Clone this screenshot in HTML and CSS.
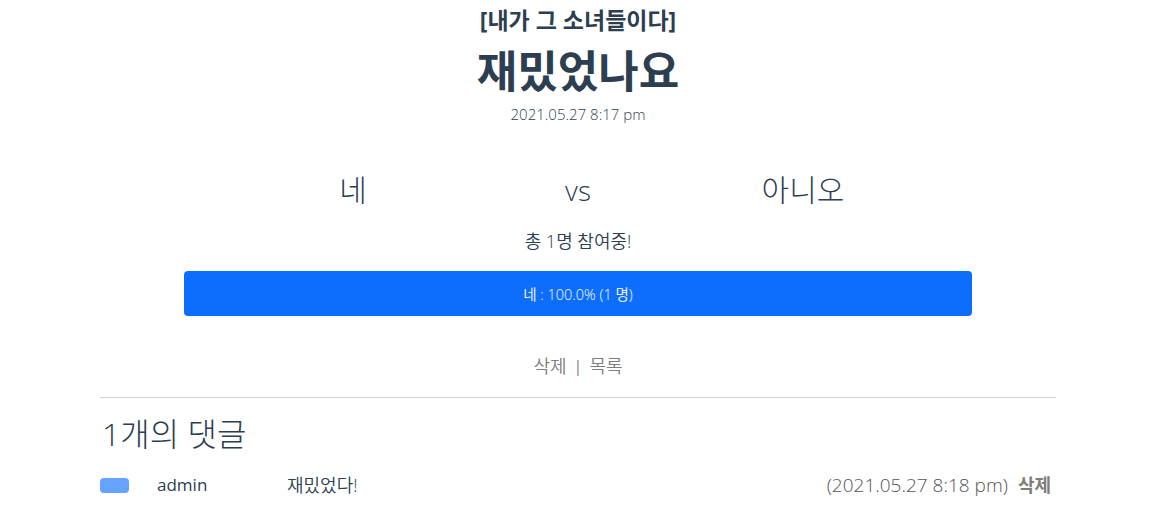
FILE: index.html
```html
<!DOCTYPE html>
<html lang="ko">
<head>
<meta charset="utf-8">
<title>투표</title>
<link rel="stylesheet" href="styles.css">
</head>
<body>
<div class="app">
  <header class="head">
    <div class="category">[내가 그 소녀들이다]</div>
    <h1 class="title">재밌었나요</h1>
    <div class="date">2021.05.27 8:17 pm</div>
  </header>

  <section class="versus">
    <div class="opt">네</div>
    <div class="vs">vs</div>
    <div class="opt">아니오</div>
  </section>

  <div class="count">총 1명 참여중!</div>

  <div class="bar">
    <div class="bar-fill" style="width:100%">네 : 100.0% (1 명)</div>
  </div>

  <nav class="links">
    <a href="#" class="link">삭제</a>
    <span class="sep">|</span>
    <a href="#" class="link">목록</a>
  </nav>

  <hr class="divider">

  <section class="comments">
    <h2 class="comments-title">1개의 댓글</h2>
    <div class="comment">
      <span class="badge"></span>
      <span class="author">admin</span>
      <span class="text">재밌었다!</span>
      <span class="cdate">(2021.05.27 8:18 pm)</span>
      <a href="#" class="cdel">삭제</a>
    </div>
  </section>
</div>
</body>
</html>
```

FILE: styles.css
```css
* { box-sizing: border-box; }
html, body { margin: 0; padding: 0; background: #fff; }
body {
  font-family: "Open Sans", "Noto Sans CJK KR", sans-serif;
  color: #2c3e50;
}
.app {
  width: 1156px;
  display: flex;
  flex-direction: column;
  align-items: center;
}
.head {
  display: flex;
  flex-direction: column;
  align-items: center;
  padding-top: 4px;
}
.category {
  font-size: 23px;
  font-weight: 700;
  line-height: 32px;
}
.title {
  margin: 4px 0 0;
  font-size: 44px;
  font-weight: 700;
  line-height: 62px;
}
.date {
  font-size: 15px;
  font-weight: 350;
  line-height: 20px;
  margin-top: 2px;
}
.versus {
  display: grid;
  grid-template-columns: 225px 225px 225px;
  justify-items: center;
  align-items: center;
  margin-top: 46px;
  font-weight: 300;
}
.opt { font-size: 30px; line-height: 40px; }
.vs { font-size: 28px; line-height: 40px; margin-top: 0; }
.count {
  margin-top: 19px;
  font-size: 18px;
  font-weight: 350;
  line-height: 24px;
}
.bar {
  margin-top: 18px;
  width: 788px;
  height: 45px;
  border-radius: 4px;
  overflow: hidden;
  background: #e9ecef;
}
.bar-fill {
  height: 100%;
  background: #0d6efd;
  color: #fff;
  font-size: 14.5px;
  font-weight: 350;
  display: flex;
  align-items: center;
  justify-content: center;
}
.links {
  margin-top: 37px;
  font-size: 18px;
  font-weight: 350;
  line-height: 26px;
  color: #7d7d7d;
  display: flex;
  gap: 7px;
}
.link { color: #7d7d7d; text-decoration: none; }
.sep { font-size: 16px; font-weight: 400; }
.divider {
  align-self: stretch;
  margin: 18px 100px 0;
  border: 0;
  border-top: 1px solid #cfcfcf;
}
.comments {
  align-self: stretch;
  margin: 0 100px;
}
.comments-title {
  margin: 15px 0 0 2px;
  font-size: 32px;
  font-weight: 300;
  line-height: 42px;
}
.comment {
  display: flex;
  align-items: center;
  margin-top: 18px;
  font-size: 17px;
  line-height: 24px;
}
.badge {
  width: 29px;
  height: 15px;
  border-radius: 4px;
  background: #66a3ff;
}
.author { margin-left: 28px; width: 130px; }
.text { flex: 1; font-size: 18px; font-weight: 350; }
.cdate { color: #555; font-size: 19px; font-weight: 300; }
.cdel {
  margin-left: 10px;
  margin-right: 5px;
  color: #7d7d7d;
  font-size: 18px;
  font-weight: 700;
  text-decoration: none;
}
```
